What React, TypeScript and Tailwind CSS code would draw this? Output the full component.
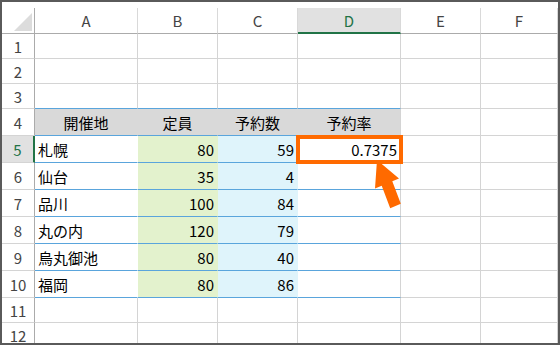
import React from "react";

type Row = { label: string; place: string; cap: string; booked: string; rate: string };

const colHeads = [
  { key: "A", w: "w-[103px]" },
  { key: "B", w: "w-[80px]" },
  { key: "C", w: "w-[80px]" },
  { key: "D", w: "w-[103px]" },
  { key: "E", w: "w-[80px]" },
  { key: "F", w: "w-[77px]" },
];

const rows: Row[] = [
  { label: "5", place: "札幌", cap: "80", booked: "59", rate: "0.7375" },
  { label: "6", place: "仙台", cap: "35", booked: "4", rate: "" },
  { label: "7", place: "品川", cap: "100", booked: "84", rate: "" },
  { label: "8", place: "丸の内", cap: "120", booked: "79", rate: "" },
  { label: "9", place: "烏丸御池", cap: "80", booked: "40", rate: "" },
  { label: "10", place: "福岡", cap: "80", booked: "86", rate: "" },
];

const cell = "shrink-0 box-border flex items-center border-r border-b";

const RowHead = ({ n, active }: { n: string; active?: boolean }) => (
  <div
    className={`${cell} w-[33px] justify-center border-b-[#d4d4d4] ${
      active ? "bg-[#e1e1e1] border-r-2 border-r-[#217346] text-[#217346]" : "border-r-[#ababab] text-[#444]"
    }`}
  >
    {n}
  </div>
);

// blank grid row (rows 1-3, 11-12)
const EmptyRow = ({ n, blueBottom }: { n: string; blueBottom?: boolean }) => (
  <div className="flex h-[25px]">
    <RowHead n={n} />
    {colHeads.map((c, i) => (
      <div
        key={c.key}
        className={`${cell} ${c.w} border-r-[#d4d4d4] ${blueBottom && i < 4 ? "border-b-[#5aa5dc]" : "border-b-[#d4d4d4]"}`}
      />
    ))}
  </div>
);

const TableRow = ({ n, cells, head, active }: { n: string; cells: string[]; head?: boolean; active?: boolean }) => (
  <div className="flex h-[27px]">
    <RowHead n={n} active={active} />
    <div className={`${cell} w-[103px] border-r-transparent border-b-[#5aa5dc] ${head ? "bg-[#d9d9d9] justify-center" : "pl-[3px]"}`}>
      {cells[0]}
    </div>
    <div className={`${cell} w-[80px] border-r-transparent border-b-[#5aa5dc] ${head ? "bg-[#d9d9d9] justify-center" : "bg-[#e3f2cd] justify-end pr-[3px]"}`}>
      {cells[1]}
    </div>
    <div className={`${cell} w-[80px] border-r-transparent border-b-[#5aa5dc] ${head ? "bg-[#d9d9d9] justify-center" : "bg-[#dff4fb] justify-end pr-[3px]"}`}>
      {cells[2]}
    </div>
    <div className={`${cell} w-[103px] border-r-[#d4d4d4] border-b-[#5aa5dc] ${head ? "bg-[#d9d9d9] justify-center" : "justify-end pr-[3px]"}`}>
      {cells[3]}
    </div>
    <div className={`${cell} w-[80px] border-r-[#d4d4d4] border-b-[#d4d4d4]`} />
    <div className={`${cell} w-[77px] border-r-[#d4d4d4] border-b-[#d4d4d4]`} />
  </div>
);

export default function App() {
  return (
    <div className="relative w-[560px] h-[345px] overflow-hidden border-2 border-[#5a5a5a] bg-white text-[15px] text-black font-['Noto_Sans_CJK_JP',sans-serif] leading-none">
      <div className="h-[6px]" />
      {/* column letters */}
      <div className="flex h-[26px] text-[#444]">
        <div className={`${cell} w-[33px] justify-end items-end pr-[2px] pb-[2px] border-r-[#ababab] border-b-[#ababab]`}>
          <svg width="18" height="18" viewBox="0 0 18 18">
            <polygon points="18,0 18,18 0,18" fill="#dcdcdc" />
          </svg>
        </div>
        {colHeads.map((c) => (
          <div
            key={c.key}
            className={`${cell} ${c.w} justify-center border-r-[#d9d9d9] ${
              c.key === "D" ? "bg-[#e1e1e1] border-b-2 border-b-[#217346] text-[#217346]" : "border-b-[#ababab]"
            }`}
          >
            {c.key}
          </div>
        ))}
      </div>
      <EmptyRow n="1" />
      <EmptyRow n="2" />
      <EmptyRow n="3" blueBottom />
      <TableRow n="4" head cells={["開催地", "定員", "予約数", "予約率"]} />
      {rows.map((r) => (
        <TableRow key={r.label} n={r.label} active={r.label === "5"} cells={[r.place, r.cap, r.booked, r.rate]} />
      ))}
      <EmptyRow n="11" />
      <EmptyRow n="12" />

      {/* highlight on D5 and pointer */}
      <div className="absolute left-[294px] top-[133px] w-[107px] h-[29px] border-4 border-[#ff6a00]" />
      <svg className="absolute left-0 top-0 pointer-events-none" width="560" height="345" viewBox="2 2 560 345">
        <polygon
          points="377,160 399,178.4 392.3,181.2 400.8,203.7 390.2,208.3 381.7,185.8 375,188.6"
          fill="#ff6a00"
        />
      </svg>
    </div>
  );
}
